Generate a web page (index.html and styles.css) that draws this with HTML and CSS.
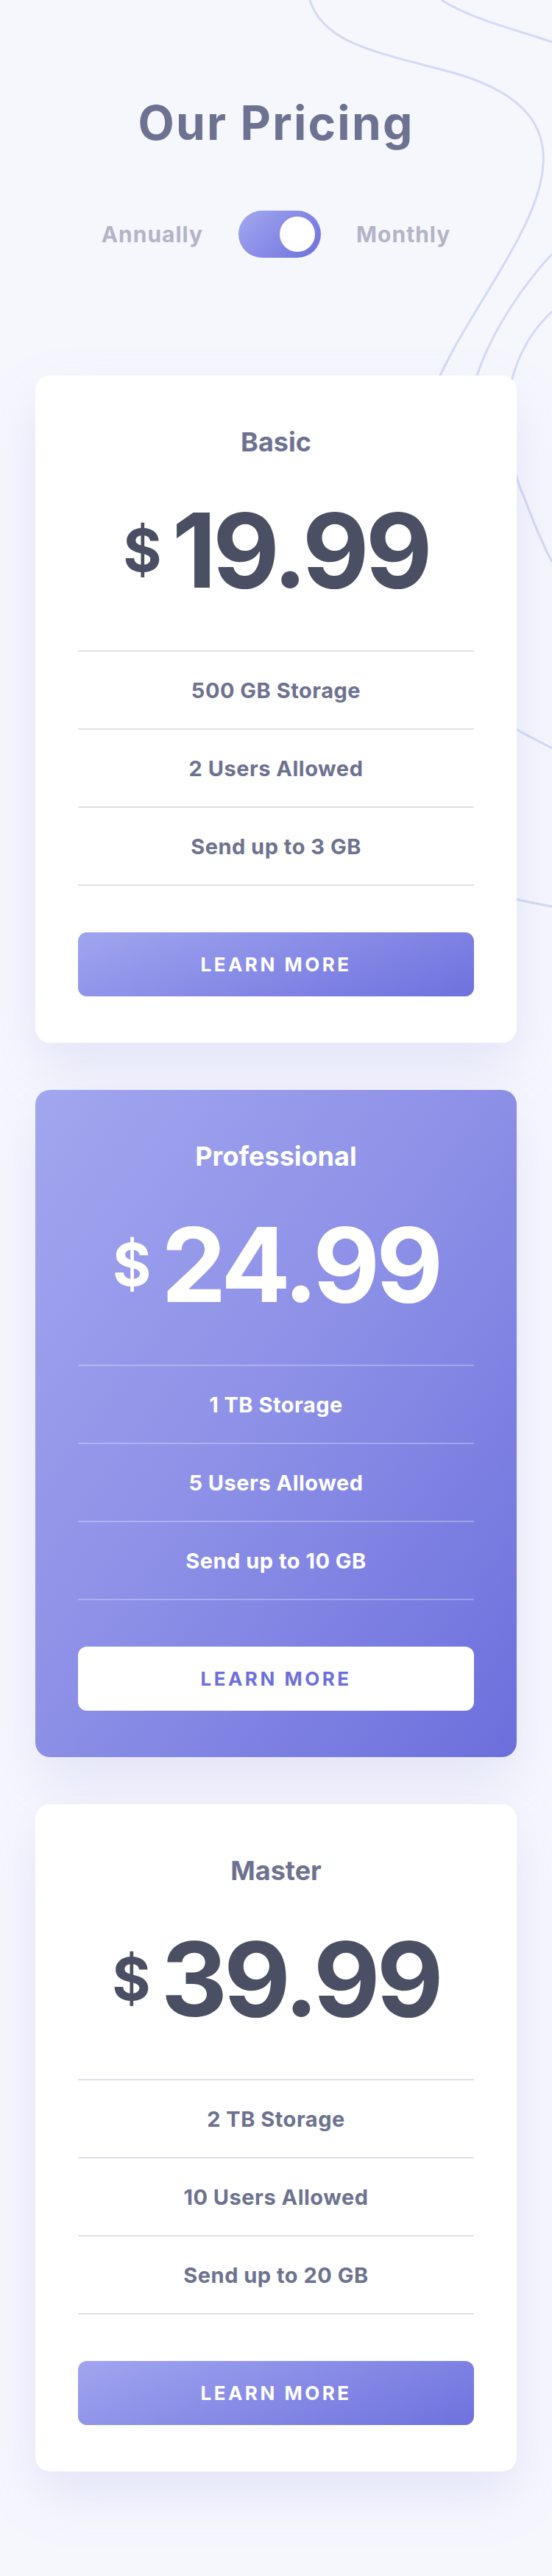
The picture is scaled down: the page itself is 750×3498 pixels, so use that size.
FILE: index.html
```html
<!DOCTYPE html>
<html lang="en">
<head>
<meta charset="utf-8">
<title>Our Pricing</title>
<link rel="stylesheet" href="styles.css">
</head>
<body>
<div class="page">
  <svg class="bg-lines" width="750" height="1300" viewBox="0 0 750 1300" aria-hidden="true">
    <path d="M421 0 C440 62 520 72 620 100 C715 128 748 175 736 240 C722 320 640 420 598 510 C570 570 545 620 520 680"/>
    <path d="M600 0 C640 26 700 40 750 57"/>
    <path d="M750 345 C712 385 668 450 648 510 C630 560 615 610 600 660"/>
    <path d="M750 423 C705 465 690 520 690 560 C690 610 700 650 712 675 C725 710 738 740 750 763"/>
    <path d="M620 950 C660 968 700 990 750 1016"/>
    <path d="M600 1195 C650 1210 700 1222 750 1231"/>
  </svg>

  <header class="hero">
    <h1 class="title">Our Pricing</h1>
    <div class="switch-row">
      <span class="period">Annually</span>
      <span class="switch"><span class="knob"></span></span>
      <span class="period">Monthly</span>
    </div>
  </header>

  <main class="plans">
    <section class="plan">
      <h2 class="plan-name">Basic</h2>
      <div class="price"><span class="currency">$</span><span class="amount">19.99</span></div>
      <ul class="features">
        <li>500 GB Storage</li>
        <li>2 Users Allowed</li>
        <li>Send up to 3 GB</li>
      </ul>
      <a class="btn" href="#">LEARN MORE</a>
    </section>

    <section class="plan plan-featured">
      <h2 class="plan-name">Professional</h2>
      <div class="price"><span class="currency">$</span><span class="amount">24.99</span></div>
      <ul class="features">
        <li>1 TB Storage</li>
        <li>5 Users Allowed</li>
        <li>Send up to 10 GB</li>
      </ul>
      <a class="btn" href="#">LEARN MORE</a>
    </section>

    <section class="plan">
      <h2 class="plan-name">Master</h2>
      <div class="price"><span class="currency">$</span><span class="amount">39.99</span></div>
      <ul class="features">
        <li>2 TB Storage</li>
        <li>10 Users Allowed</li>
        <li>Send up to 20 GB</li>
      </ul>
      <a class="btn" href="#">LEARN MORE</a>
    </section>
  </main>
</div>
</body>
</html>
```
FILE: styles.css
```css
* { box-sizing: border-box; }

html, body {
  margin: 0;
  padding: 0;
}

body {
  background: #f6f7fd;
  font-family: "Inter", "Liberation Sans", sans-serif;
  color: #6e7491;
}

.page {
  position: relative;
  width: 750px;
  padding-bottom: 142px;
  overflow: hidden;
}

.bg-lines {
  position: absolute;
  top: 0;
  left: 0;
  z-index: 0;
}

.bg-lines path {
  fill: none;
  stroke: #d3d9f6;
  stroke-width: 3;
}

.hero {
  position: relative;
  z-index: 1;
}

.title {
  margin: 135px 0 0;
  font-size: 64px;
  line-height: 64px;
  font-weight: 700;
  letter-spacing: 2.2px;
  text-align: center;
  color: #6d7290;
}

.switch-row {
  margin-top: 87px;
  height: 64px;
  display: flex;
  justify-content: center;
  align-items: center;
  gap: 48px;
}

.period {
  font-size: 30px;
  line-height: 30px;
  font-weight: 700;
  letter-spacing: 1px;
  color: #b3b4c7;
}

.switch {
  width: 112px;
  height: 64px;
  padding: 8px;
  border-radius: 32px;
  display: flex;
  justify-content: flex-end;
  background: linear-gradient(135deg, #a3a8f0 0%, #6d70dc 100%);
}

.knob {
  width: 48px;
  height: 48px;
  border-radius: 50%;
  background: #fff;
}

.plans {
  position: relative;
  z-index: 1;
  margin: 160px 48px 0;
  display: flex;
  flex-direction: column;
  gap: 64px;
}

.plan {
  background: #fff;
  border-radius: 20px;
  padding: 72px 58px 63px;
  box-shadow: 0 32px 80px rgba(110, 112, 215, 0.14);
}

.plan-name {
  margin: 0;
  font-size: 36px;
  line-height: 36px;
  font-weight: 700;
  text-align: center;
  color: #6d7290;
}

.price {
  margin-top: 59px;
  height: 140px;
  display: flex;
  justify-content: center;
  align-items: center;
  gap: 14px;
  color: #4b4f63;
}

.currency {
  font-size: 80px;
  line-height: 80px;
  font-weight: 700;
}

.amount {
  font-size: 140px;
  line-height: 140px;
  font-weight: 700;
  letter-spacing: -5px;
}

.features {
  list-style: none;
  margin: 66px 0 0;
  padding: 0;
  border-top: 2px solid #e0e0e8;
}

.features li {
  height: 106px;
  display: flex;
  justify-content: center;
  align-items: center;
  border-bottom: 2px solid #e0e0e8;
  font-size: 29px;
  font-weight: 700;
  letter-spacing: 0.5px;
  color: #6d7290;
}

.btn {
  margin-top: 63px;
  height: 87px;
  display: flex;
  justify-content: center;
  align-items: center;
  border-radius: 12px;
  background: linear-gradient(160deg, #a1a5ef 0%, #6e71dd 100%);
  color: #fff;
  font-size: 26px;
  font-weight: 700;
  letter-spacing: 3.5px;
  text-decoration: none;
}

.plan-featured {
  background: linear-gradient(to bottom right, #a2a6ef 0%, #8c8fe6 50%, #6c6fdc 100%);
}

.plan-featured .plan-name,
.plan-featured .price,
.plan-featured .features li {
  color: #fff;
}

.plan-featured .features {
  border-top-color: rgba(255, 255, 255, 0.28);
}

.plan-featured .features li {
  border-bottom-color: rgba(255, 255, 255, 0.28);
}

.plan-featured .btn {
  background: #fff;
  color: #6d70dc;
}
```
